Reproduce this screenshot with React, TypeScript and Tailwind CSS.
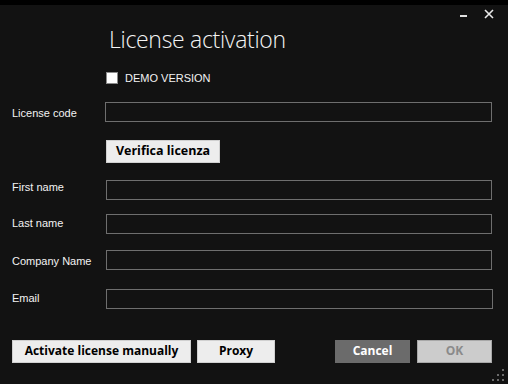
import React from "react";

const labelFont = { fontFamily: '"Liberation Sans", Arial, sans-serif' };
const buttonFont = { fontFamily: '"Open Sans", "Noto Sans", sans-serif' };

type FieldRowProps = {
  label: string;
  className?: string;
  labelClassName?: string;
  inputClassName?: string;
};

const FieldRow = ({ label, className, labelClassName, inputClassName }: FieldRowProps) => (
  <div className={`flex items-center ${className ?? ""}`}>
    <span
      className={`shrink-0 whitespace-nowrap pl-[12px] text-[11px] text-[#f2f2f2] ${labelClassName ?? "w-[106px]"}`}
    >
      {label}
    </span>
    <input
      type="text"
      className={`h-[20px] border border-[#6e6e6e] bg-[#121212] outline-none ${inputClassName ?? "w-[386px]"}`}
    />
  </div>
);

const ResizeGrip = () => (
  <svg width="12" height="12" viewBox="0 0 12 12" className="absolute bottom-[3px] right-[4px]">
    <rect x="10" y="0" width="2" height="2" fill="#6a6a6a" />
    <rect x="5" y="5" width="2" height="2" fill="#6a6a6a" />
    <rect x="10" y="5" width="2" height="2" fill="#6a6a6a" />
    <rect x="0" y="10" width="2" height="2" fill="#6a6a6a" />
    <rect x="5" y="10" width="2" height="2" fill="#6a6a6a" />
    <rect x="10" y="10" width="2" height="2" fill="#6a6a6a" />
  </svg>
);

export default function App() {
  const [demo, setDemo] = React.useState(false);

  return (
    <div className="relative flex h-[384px] w-[508px] flex-col overflow-hidden bg-[#121212]" style={labelFont}>
      <div className="h-[5px] bg-black" />

      {/* window buttons */}
      <div className="absolute right-[14px] top-[9px] flex items-end gap-[17px]">
        <div className="mb-[2px] h-[2px] w-[7px] bg-[#e0e0e0]" />
        <svg width="10" height="10" viewBox="0 0 10 10">
          <path d="M1 1L9 9M9 1L1 9" stroke="#eaeaea" strokeWidth="1.6" />
        </svg>
      </div>

      <h1
        className="ml-[109px] mt-[19px] text-[23px] font-light leading-[30px] tracking-[-0.3px] text-[#f4f4f4]"
        style={buttonFont}
      >
        License activation
      </h1>

      <label className="ml-[106px] mt-[17px] flex cursor-pointer items-center gap-[7px]">
        <span
          className="h-[12px] w-[12px] border border-[#8a8a8a] bg-white"
          onClick={() => setDemo(!demo)}
        />
        <span className="text-[11px] leading-[14px] text-[#f2f2f2]">DEMO VERSION</span>
      </label>

      <FieldRow
        label="License code"
        className="mt-[17px]"
        labelClassName="w-[105px] pt-[2px]"
        inputClassName="w-[387px]"
      />

      <div className="ml-[106px] mt-[16px]">
        <button
          className="h-[23px] w-[114px] border border-[#d0d0d0] bg-[#ededed] text-[12.5px] font-bold text-black"
          style={buttonFont}
        >
          Verifica licenza
        </button>
      </div>

      <FieldRow label="First name" className="mt-[17px]" labelClassName="w-[106px] -mt-[5px]" />
      <FieldRow label="Last name" className="mt-[14px]" labelClassName="w-[106px] -mt-[2px]" />
      <FieldRow label="Company Name" className="mt-[16px]" labelClassName="w-[106px] pt-[2px]" />
      <FieldRow label="Email" className="mt-[19px]" labelClassName="w-[106px] -mt-[2px]" inputClassName="w-[387px]" />

      <div className="mt-[31px] flex items-center px-[12px] text-[12px] font-bold" style={buttonFont}>
        <button className="h-[23px] w-[179px] border border-[#d0d0d0] bg-[#ededed] text-black">
          Activate license manually
        </button>
        <button className="ml-[6px] h-[23px] w-[78px] border border-[#d0d0d0] bg-[#ededed] text-black">
          Proxy
        </button>
        <button className="ml-auto h-[23px] w-[75px] bg-[#6b6b6b] text-white">Cancel</button>
        <button className="ml-[7px] mr-[4px] h-[23px] w-[75px] border border-[#a8a8a8] bg-[#cccccc] text-[#8a8a8a]">
          OK
        </button>
      </div>

      <ResizeGrip />
    </div>
  );
}
